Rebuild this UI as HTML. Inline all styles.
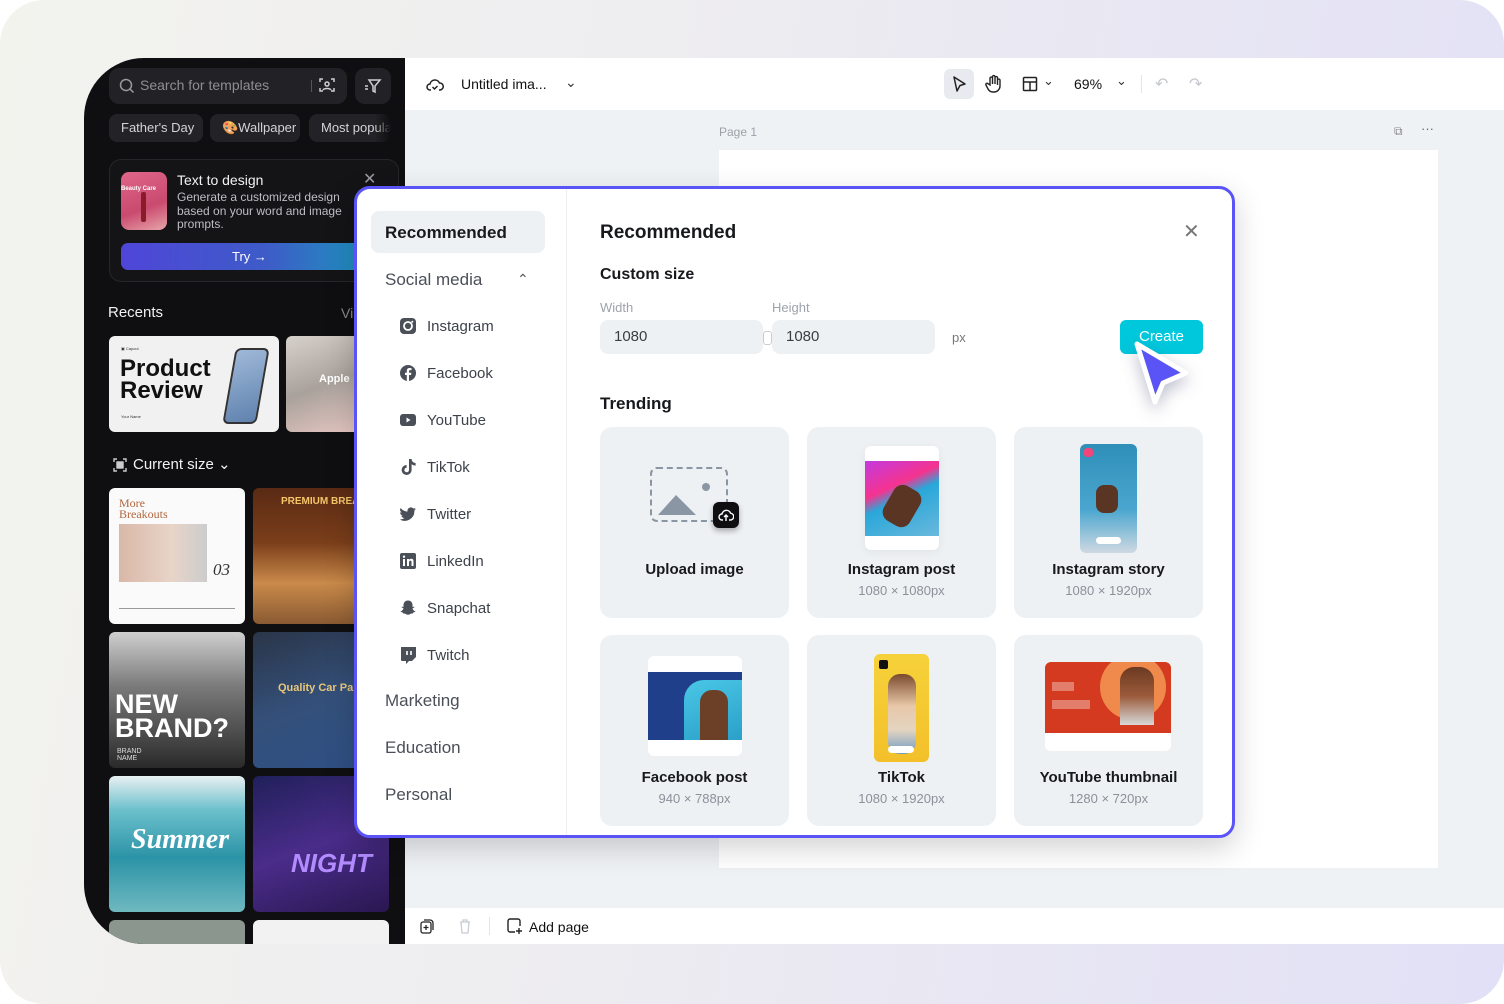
<!DOCTYPE html>
<html><head><meta charset="utf-8"><style>
*{box-sizing:border-box;margin:0;padding:0}
body{width:1504px;height:1004px;position:relative;overflow:hidden;background:#fff;font-family:"Liberation Sans",sans-serif}
.frame{position:absolute;left:0;top:0;width:1504px;height:1004px;border-radius:44px;background:linear-gradient(100deg,#f3f3ee 0%,#eeedf0 40%,#e2e0f6 100%)}
.win{position:absolute;left:84px;top:58px;width:1420px;height:886px;border-radius:60px 0 0 60px;overflow:hidden;background:#eff2f5}
.left{position:absolute;left:0;top:0;width:321px;height:886px;background:#0f0f11}
.abs{position:absolute}
.chip{position:absolute;top:56px;height:28px;border-radius:8px;background:#232327;color:#d4d4d8;font-size:13px;line-height:28px;padding:0 12px;white-space:nowrap;overflow:hidden}
.thumb{position:absolute;border-radius:6px;overflow:hidden}
.top{position:absolute;left:321px;top:0;right:0;height:52px;background:#fff}
.bottom{position:absolute;left:321px;top:850px;right:0;height:36px;background:#fff}
.modal{position:absolute;left:354px;top:186px;width:881px;height:652px;border:3px solid #5a54f6;border-radius:16px;background:#fff;box-shadow:0 10px 30px rgba(0,0,0,.18);overflow:hidden}
.nav{position:absolute;left:0;top:0;width:210px;height:100%;border-right:1px solid #eceef1}
.ni{position:absolute;left:28px;font-size:17px;color:#4b4f58}
.si{position:absolute;left:42px;font-size:15px;color:#3d414a;display:flex;align-items:center;gap:10px}
.si svg{width:18px;height:18px}
.card{position:absolute;width:189px;height:191px;border-radius:12px;background:#eef1f4;text-align:center}
.card .t{position:absolute;left:0;right:0;top:134px;font-size:15px;color:#17191d;font-weight:600}
.card .s{position:absolute;left:0;right:0;top:156px;font-size:13px;color:#8c9099}
.lbl{font-size:13px;color:#9ea2aa;position:absolute}
.inp{position:absolute;top:131px;height:34px;border-radius:8px;background:#eef1f4;font-size:15px;color:#3a3d44;line-height:34px;padding-left:14px}
</style></head><body>
<div class="frame"></div>
<div class="win">
 <div class="left">
  <div class="abs" style="left:25px;top:10px;width:238px;height:36px;border-radius:10px;background:#222226"></div>
  <svg class="abs" style="left:35px;top:20px" width="16" height="16" viewBox="0 0 16 16"><circle cx="7" cy="7" r="5.5" stroke="#9a9aa0" stroke-width="1.5" fill="none"/><path d="M11 11l3.5 3.5" stroke="#9a9aa0" stroke-width="1.5"/></svg>
  <div class="abs" style="left:56px;top:19px;font-size:14px;color:#8d8d94">Search for templates</div>
  <div class="abs" style="left:227px;top:22px;width:1px;height:12px;background:#555"></div>
  <svg class="abs" style="left:234px;top:18px" width="18" height="18" viewBox="0 0 18 18" fill="none" stroke="#cfcfd4" stroke-width="1.5"><path d="M2 6V3h3M13 3h3v3M16 12v3h-3M5 15H2v-3"/><circle cx="9" cy="8" r="2"/><path d="M5 14c1-2 7-2 8 0"/></svg>
  <div class="abs" style="left:271px;top:10px;width:36px;height:36px;border-radius:10px;background:#222226"></div>
  <svg class="abs" style="left:280px;top:19px" width="18" height="18" viewBox="0 0 18 18" fill="none" stroke="#cfcfd4" stroke-width="1.5"><path d="M5 3h11l-5 6v6l-2-1V9z"/><path d="M1 9h3M1 12h3"/></svg>
  <div class="chip" style="left:25px;width:94px">Father's Day</div>
  <div class="chip" style="left:126px;width:90px">🎨Wallpaper</div>
  <div class="chip" style="left:225px;width:82px;-webkit-mask-image:linear-gradient(90deg,#000 80%,transparent)">Most popular</div>
  <div class="abs" style="left:25px;top:101px;width:290px;height:123px;border-radius:12px;border:1px solid #26262a;background:#141417"></div>
  <div class="abs" style="left:37px;top:114px;width:46px;height:58px;border-radius:8px;background:linear-gradient(160deg,#e0668a,#c94a6f 60%,#e7a5a9)"><div style="font-size:6px;color:#fff;font-weight:bold;margin-top:14px">Beauty Care</div><div style="position:absolute;left:20px;top:20px;width:5px;height:30px;background:#8a1c2a;border-radius:2px"></div></div>
  <div class="abs" style="left:93px;top:114px;font-size:14px;color:#f2f2f4">Text to design</div>
  <div class="abs" style="left:93px;top:133px;width:175px;font-size:12px;line-height:13.5px;color:#bdbdc3">Generate a customized design based on your word and image prompts.</div>
  <div class="abs" style="left:279px;top:111px;font-size:16px;color:#9a9aa0">✕</div>
  <div class="abs" style="left:37px;top:185px;width:240px;height:27px;border-radius:7px;background:linear-gradient(90deg,#4f46d8,#3e5bc8 60%,#1e8fbd);color:#fff;font-size:13px;line-height:27px"><span style="position:absolute;left:111px">Try →</span></div>
  <div class="abs" style="left:24px;top:246px;font-size:15px;color:#f2f2f4">Recents</div>
  <div class="abs" style="left:257px;top:247px;font-size:14px;color:#888">Vi</div>
  <div class="thumb" style="left:25px;top:278px;width:170px;height:96px;background:#f1f1f1">
   <div style="position:absolute;left:12px;top:10px;font-size:4px;color:#333">▣ Capcut</div>
   <div style="position:absolute;left:11px;top:22px;font-size:24px;line-height:22px;font-weight:bold;color:#111">Product<br>Review</div>
   <div style="position:absolute;left:12px;top:78px;font-size:4px;color:#333">Your Name</div>
   <div style="position:absolute;left:120px;top:12px;width:34px;height:76px;border-radius:6px;background:linear-gradient(160deg,#9fb8d8,#5f82ae);border:2px solid #333;transform:skewX(-10deg)"></div>
  </div>
  <div class="thumb" style="left:202px;top:278px;width:80px;height:96px;background:linear-gradient(160deg,#d8d2cc,#a9a19b 50%,#e8c8c4)"><div style="position:absolute;left:33px;top:37px;font-size:11px;color:#fff;font-weight:bold">Apple</div></div>
  <svg class="abs" style="left:29px;top:400px" width="14" height="14" viewBox="0 0 14 14" fill="none" stroke="#ccc" stroke-width="1.4"><path d="M1 4V1h3M10 1h3v3M13 10v3h-3M4 13H1v-3"/><rect x="4" y="4" width="6" height="6" fill="#ccc"/></svg>
  <div class="abs" style="left:49px;top:397px;font-size:15px;color:#f2f2f4">Current size ⌄</div>
  <div class="thumb" style="left:25px;top:430px;width:136px;height:136px;background:#fafafa">
   <div style="position:absolute;left:10px;top:10px;font-family:'Liberation Serif',serif;font-size:12px;line-height:11px;color:#b0673f">More<br>Breakouts</div>
   <div style="position:absolute;left:10px;top:36px;width:88px;height:58px;background:linear-gradient(90deg,#d9b8a8,#e8d4c8 60%,#ccc)"></div>
   <div style="position:absolute;left:104px;top:72px;font-family:'Liberation Serif',serif;font-style:italic;font-size:17px;color:#333">03</div>
   <div style="position:absolute;left:10px;top:120px;width:116px;height:1px;background:#999"></div>
  </div>
  <div class="thumb" style="left:169px;top:430px;width:136px;height:136px;background:linear-gradient(180deg,#5a2a14,#7a3e1a 40%,#c98a4a 70%,#8a5a32)"><div style="position:absolute;left:28px;top:8px;font-size:10px;color:#f5c66a;font-weight:bold;white-space:nowrap">PREMIUM BREAD</div></div>
  <div class="thumb" style="left:25px;top:574px;width:136px;height:136px;background:linear-gradient(180deg,#cfcfcf,#7a7a7a 40%,#2a2a2a)"><div style="position:absolute;left:6px;top:60px;font-size:27px;line-height:24px;font-weight:900;color:#fff">NEW<br>BRAND?</div><div style="position:absolute;left:8px;top:116px;font-size:7px;line-height:7px;color:#ddd">BRAND<br>NAME</div></div>
  <div class="thumb" style="left:169px;top:574px;width:136px;height:136px;background:linear-gradient(160deg,#2a3548,#34507a 50%,#2e4f86)"><div style="position:absolute;left:25px;top:50px;font-size:11px;color:#e9c77a;font-weight:bold;white-space:nowrap">Quality Car Parts</div></div>
  <div class="thumb" style="left:25px;top:718px;width:136px;height:136px;background:linear-gradient(180deg,#e8f0f2,#6cc0cc 25%,#2b93a6 60%,#6fb9c0)"><div style="position:absolute;left:22px;top:48px;font-size:28px;font-style:italic;font-weight:bold;color:#fff;font-family:'Liberation Serif',serif">Summer</div></div>
  <div class="thumb" style="left:169px;top:718px;width:136px;height:136px;background:linear-gradient(160deg,#20205a,#4a2c8a 50%,#2a1750)"><div style="position:absolute;left:38px;top:72px;font-size:26px;font-weight:900;font-style:italic;color:#b28cff">NIGHT</div></div>
  <div class="thumb" style="left:25px;top:862px;width:136px;height:30px;background:#8a968e"></div>
  <div class="thumb" style="left:169px;top:862px;width:136px;height:30px;background:#f2f2f2"></div>
 </div>
 <div class="top">
  <svg class="abs" style="left:21px;top:17px" width="18" height="18" viewBox="0 0 18 18" fill="none" stroke="#222" stroke-width="1.5"><path d="M5 15H4a3 3 0 010-6 5 5 0 019.5-1A3.5 3.5 0 0114 15h-1"/><path d="M6.5 12l2 2 3-3"/></svg>
  <div class="abs" style="left:56px;top:18px;font-size:14px;color:#111">Untitled ima...</div>
  <div class="abs" style="left:160px;top:16px;font-size:14px;color:#333">⌄</div>
  <div class="abs" style="left:539px;top:11px;width:30px;height:30px;border-radius:6px;background:#e7ebef"></div>
  <svg class="abs" style="left:546px;top:17px" width="16" height="18" viewBox="0 0 16 18" fill="none" stroke="#222" stroke-width="1.5"><path d="M3 2l11 7-5 1.5L6 16z" stroke-linejoin="round"/></svg>
  <svg class="abs" style="left:580px;top:16px" width="18" height="20" viewBox="0 0 18 20" fill="none" stroke="#222" stroke-width="1.4"><path d="M5 11V4a1.3 1.3 0 012.5 0v6V2.5a1.3 1.3 0 012.5 0V10V3.5a1.3 1.3 0 012.5 0V11V6a1.3 1.3 0 012.5 0v6a6 6 0 01-6 6h-1a6 6 0 01-5-3l-2-4a1.2 1.2 0 012-1.3z"/></svg>
  <svg class="abs" style="left:617px;top:18px" width="16" height="16" viewBox="0 0 16 16" fill="none" stroke="#222" stroke-width="1.5"><rect x="1.5" y="1.5" width="13" height="13" rx="1"/><path d="M1.5 6h13M8 6v8.5"/></svg>
  <div class="abs" style="left:638px;top:15px;font-size:13px;color:#333">⌄</div>
  <div class="abs" style="left:669px;top:18px;font-size:14px;color:#111">69%</div>
  <div class="abs" style="left:711px;top:15px;font-size:13px;color:#333">⌄</div>
  <div class="abs" style="left:736px;top:17px;width:1px;height:18px;background:#e3e5e8"></div>
  <div class="abs" style="left:750px;top:16px;font-size:16px;color:#c4c8ce">↶</div>
  <div class="abs" style="left:784px;top:16px;font-size:16px;color:#c4c8ce">↷</div>
 </div>
 <div class="abs" style="left:635px;top:67px;font-size:12px;color:#9ca1a9">Page 1</div>
 <div class="abs" style="left:1310px;top:66px;font-size:12px;color:#888">⧉</div>
 <div class="abs" style="left:1337px;top:63px;font-size:13px;color:#666">···</div>
 <div class="abs" style="left:635px;top:92px;width:719px;height:718px;background:#fff"></div>
 <div class="bottom">
  <svg class="abs" style="left:14px;top:10px" width="16" height="16" viewBox="0 0 16 16" fill="none" stroke="#222" stroke-width="1.3"><rect x="2" y="4" width="10" height="11" rx="2"/><path d="M5 2h6a3 3 0 013 3v7M7 7v5M4.5 9.5h5"/></svg>
  <svg class="abs" style="left:53px;top:10px" width="14" height="16" viewBox="0 0 14 16" fill="none" stroke="#c8ccd2" stroke-width="1.3"><path d="M2 4h10M5 4V2h4v2M3 4l1 11h6l1-11"/></svg>
  <div class="abs" style="left:84px;top:9px;width:1px;height:18px;background:#e3e5e8"></div>
  <svg class="abs" style="left:101px;top:9px" width="18" height="18" viewBox="0 0 18 18" fill="none" stroke="#222" stroke-width="1.4"><path d="M9 15H4a2 2 0 01-2-2V4a2 2 0 012-2h8a2 2 0 012 2v5M13 11v6M10 14h6"/></svg>
  <div class="abs" style="left:124px;top:11px;font-size:14px;color:#111">Add page</div>
 </div>
</div>

<div class="modal">
 <div class="nav">
  <div class="abs" style="left:14px;top:22px;width:174px;height:42px;border-radius:8px;background:#eef1f4"></div>
  <div class="ni" style="top:34px;color:#17191d;font-weight:600">Recommended</div>
  <div class="ni" style="top:81px">Social media</div>
  <div class="abs" style="left:160px;top:82px;font-size:14px;color:#555">⌃</div>
  <div class="si" style="top:128px"><svg viewBox="0 0 18 18"><rect x="1" y="1" width="16" height="16" rx="4" fill="#4b4f58"/><circle cx="9" cy="9" r="4" fill="none" stroke="#fff" stroke-width="1.8"/><circle cx="13.3" cy="4.7" r="1" fill="#fff"/></svg>Instagram</div>
  <div class="si" style="top:175px"><svg viewBox="0 0 18 18"><circle cx="9" cy="9" r="8" fill="#4b4f58"/><path d="M10 17v-6h2l.4-2.3H10V7.3c0-.7.3-1.2 1.2-1.2h1.3V4.1A14 14 0 0010.6 4C8.9 4 7.8 5 7.8 6.9v1.8H6V11h1.8v6z" fill="#fff"/></svg>Facebook</div>
  <div class="si" style="top:222px"><svg viewBox="0 0 18 18"><rect x="1" y="3" width="16" height="12" rx="3" fill="#4b4f58"/><path d="M7.5 6.5v5l4-2.5z" fill="#fff"/></svg>YouTube</div>
  <div class="si" style="top:269px"><svg viewBox="0 0 18 18"><path d="M10 1h2.6a4 4 0 004 4v2.6a6.5 6.5 0 01-4-1.3V12a5 5 0 11-5-5v2.7a2.3 2.3 0 102.4 2.3z" fill="#4b4f58"/></svg>TikTok</div>
  <div class="si" style="top:316px"><svg viewBox="0 0 18 18"><path d="M17 4a7 7 0 01-2 .6 3.4 3.4 0 001.5-1.9 7 7 0 01-2.2.8A3.4 3.4 0 008.5 6.6 9.7 9.7 0 011.6 3a3.4 3.4 0 001 4.6 3.4 3.4 0 01-1.5-.4 3.4 3.4 0 002.7 3.3 3.4 3.4 0 01-1.5.1 3.4 3.4 0 003.2 2.4A6.9 6.9 0 01.5 14.4 9.7 9.7 0 0015.4 6v-.4A7 7 0 0017 4z" fill="#4b4f58"/></svg>Twitter</div>
  <div class="si" style="top:363px"><svg viewBox="0 0 18 18"><rect x="1" y="1" width="16" height="16" rx="2" fill="#4b4f58"/><path d="M4 7h2v7H4zM5 3.5a1.2 1.2 0 110 2.4 1.2 1.2 0 010-2.4zM8 7h2v1c.5-.8 1.3-1.2 2.3-1.2 1.7 0 2.2 1.1 2.2 2.8V14h-2v-4c0-.9-.3-1.4-1-1.4-.8 0-1.5.5-1.5 1.5V14H8z" fill="#fff"/></svg>LinkedIn</div>
  <div class="si" style="top:410px"><svg viewBox="0 0 18 18"><path d="M9 1.5c3 0 4.5 2.2 4.5 4.5v2l1.5-.4c.4 0 .6.5.2.8l-1.7 1c.5 1.6 1.7 2.8 3 3.1-.2.6-1.3.8-2.2.9l-.4 1.1c-1.3-.2-2.3.1-3.3.9-.8.5-2.4.5-3.2 0-1-.8-2-1.1-3.3-.9l-.4-1.1c-.9-.1-2-.3-2.200-.9 1.3-.3 2.5-1.5 3-3.1l-1.7-1c-.4-.3-.2-.8.2-.8l1.5.4V6c0-2.3 1.5-4.5 4.5-4.5z" fill="#4b4f58"/></svg>Snapchat</div>
  <div class="si" style="top:457px"><svg viewBox="0 0 18 18"><path d="M2 1h15v10l-4 4h-3l-3 3v-3H3a1 1 0 01-1-1z" fill="#4b4f58"/><path d="M8 5v4M12 5v4" stroke="#fff" stroke-width="1.6"/></svg>Twitch</div>
  <div class="ni" style="top:502px">Marketing</div>
  <div class="ni" style="top:549px">Education</div>
  <div class="ni" style="top:596px">Personal</div>
 </div>
 <div class="abs" style="left:243px;top:33px;font-size:19px;color:#17191d;font-weight:600">Recommended</div>
 <div class="abs" style="left:826px;top:30px;font-size:20px;color:#777">✕</div>
 <div class="abs" style="left:243px;top:77px;font-size:16px;color:#17191d;font-weight:600">Custom size</div>
 <div class="lbl" style="left:243px;top:111px">Width</div>
 <div class="lbl" style="left:415px;top:111px">Height</div>
 <div class="inp" style="left:243px;width:163px">1080</div>
 <div class="abs" style="left:406px;top:142px;width:9px;height:14px;border-radius:3px;background:#fff;border:1px solid #ccc"></div>
 <div class="inp" style="left:415px;width:163px">1080</div>
 <div class="abs" style="left:595px;top:141px;font-size:13px;color:#777">px</div>
 <div class="abs" style="left:763px;top:131px;width:83px;height:34px;border-radius:6px;background:#00c8dc;color:#fff;font-size:15px;line-height:34px;text-align:center">Create</div>
 <div class="abs" style="left:243px;top:205px;font-size:17px;color:#17191d;font-weight:600">Trending</div>

 <div class="card" style="left:243px;top:238px">
  <div class="abs" style="left:50px;top:40px;width:78px;height:55px;border:2px dashed #8b96a4;border-radius:7px"></div>
  <svg class="abs" style="left:56px;top:56px" width="70" height="34" viewBox="0 0 70 34"><path d="M2 32L20 12l20 20z" fill="#8a96a4"/><circle cx="50" cy="4" r="4" fill="#8a96a4"/></svg>
  <div class="abs" style="left:113px;top:75px;width:26px;height:26px;border-radius:6px;background:#0f0f11;box-shadow:0 3px 6px rgba(0,0,0,.3)"></div>
  <svg class="abs" style="left:118px;top:80px" width="16" height="16" viewBox="0 0 16 16" fill="none" stroke="#fff" stroke-width="1.4"><path d="M5 13H4a3 3 0 010-6 4.5 4.5 0 018.6-.8A3 3 0 0112 13h-1M8 14V8M6 10l2-2 2 2"/></svg>
  <div class="t" style="top:134px">Upload image</div>
 </div>
 <div class="card" style="left:450px;top:238px">
  <div class="abs" style="left:58px;top:19px;width:74px;height:104px;border-radius:6px;background:#fff;overflow:hidden;box-shadow:0 2px 10px rgba(0,0,0,.06)">
   <div style="position:absolute;left:0;top:15px;width:74px;height:75px;background:linear-gradient(155deg,#c23ae0 0%,#f5338f 35%,#29a7d9 50%,#6ab8dc 100%)"></div>
   <div style="position:absolute;left:22px;top:40px;width:30px;height:40px;background:#5b3524;border-radius:10px;transform:rotate(30deg)"></div>
  </div>
  <div class="t">Instagram post</div><div class="s">1080 × 1080px</div>
 </div>
 <div class="card" style="left:657px;top:238px">
  <div class="abs" style="left:66px;top:17px;width:57px;height:109px;border-radius:6px;background:linear-gradient(180deg,#2f8fb8,#4aa6cf 60%,#cfd9e2);overflow:hidden">
   <div style="position:absolute;left:4px;top:4px;width:9px;height:9px;border-radius:3px;background:#f0467a"></div>
   <div style="position:absolute;left:16px;top:41px;width:22px;height:28px;background:#5b3524;border-radius:8px"></div>
   <div style="position:absolute;left:16px;top:93px;width:25px;height:7px;border-radius:4px;background:#fff"></div>
  </div>
  <div class="t">Instagram story</div><div class="s">1080 × 1920px</div>
 </div>
 <div class="card" style="left:243px;top:446px">
  <div class="abs" style="left:48px;top:21px;width:94px;height:100px;border-radius:6px;background:#fff;overflow:hidden">
   <div style="position:absolute;left:0;top:16px;width:94px;height:68px;background:#1f3f8a"></div>
   <div style="position:absolute;left:36px;top:24px;width:58px;height:60px;border-radius:20px 0 0 0;background:linear-gradient(160deg,#49c7e6,#2ba0c9)"></div>
   <div style="position:absolute;left:52px;top:34px;width:28px;height:50px;border-radius:12px 12px 0 0;background:#6b4026"></div>
  </div>
  <div class="t">Facebook post</div><div class="s">940 × 788px</div>
 </div>
 <div class="card" style="left:450px;top:446px">
  <div class="abs" style="left:67px;top:19px;width:55px;height:108px;border-radius:6px;background:linear-gradient(180deg,#f6d23a,#f3c02a);overflow:hidden">
   <div style="position:absolute;left:5px;top:6px;width:9px;height:9px;border-radius:2px;background:#111"></div>
   <div style="position:absolute;left:14px;top:20px;width:28px;height:80px;border-radius:12px;background:linear-gradient(180deg,#7b4a2e,#e8c8a8 40%,#e3d4c0 70%,#6f9ac4)"></div>
   <div style="position:absolute;left:14px;top:92px;width:26px;height:7px;border-radius:4px;background:#fff"></div>
  </div>
  <div class="t">TikTok</div><div class="s">1080 × 1920px</div>
 </div>
 <div class="card" style="left:657px;top:446px">
  <div class="abs" style="left:31px;top:27px;width:126px;height:89px;border-radius:6px;background:#fff;overflow:hidden">
   <div style="position:absolute;left:0;top:0;width:126px;height:71px;background:#d43a1f"></div>
   <div style="position:absolute;left:55px;top:-8px;width:66px;height:66px;border-radius:50%;background:#f08a4c"></div>
   <div style="position:absolute;left:75px;top:5px;width:34px;height:58px;border-radius:14px 14px 0 0;background:linear-gradient(180deg,#6b3a22,#9b5a3a 50%,#d8d8d8)"></div>
   <div style="position:absolute;left:7px;top:20px;width:22px;height:9px;background:rgba(255,255,255,.35)"></div>
   <div style="position:absolute;left:7px;top:38px;width:38px;height:9px;background:rgba(255,255,255,.35)"></div>
  </div>
  <div class="t">YouTube thumbnail</div><div class="s">1280 × 720px</div>
 </div>
</div>

<svg class="abs" style="left:1125px;top:333px;filter:drop-shadow(0 6px 8px rgba(40,40,90,.3))" width="75" height="80" viewBox="1125 333 75 80"><path d="M1137 344L1186 373L1163 383L1155 402Z" fill="#5a54f6" stroke="#fff" stroke-width="5" stroke-linejoin="round"/></svg>
</body></html>
